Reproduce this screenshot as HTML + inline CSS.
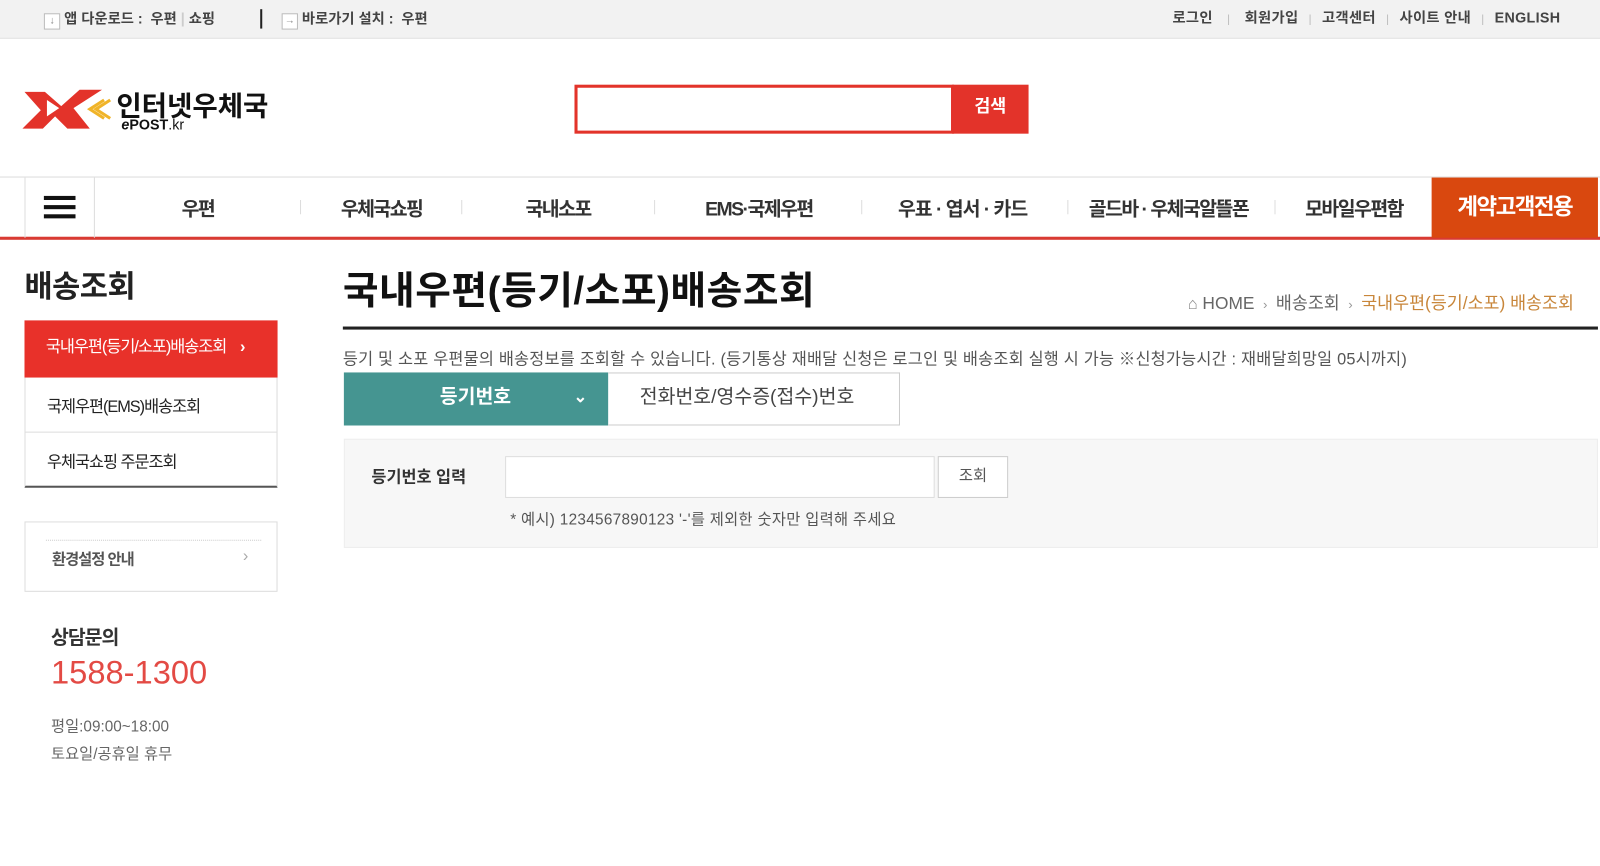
<!DOCTYPE html>
<html><head><meta charset="utf-8">
<style>
*{margin:0;padding:0;box-sizing:border-box}
html,body{width:1600px;height:866px;overflow:hidden;background:#fff}
#w{position:absolute;left:0;top:0;width:1568px;height:849px;transform:scale(1.0204);transform-origin:0 0;font-family:"Liberation Sans","Noto Sans CJK KR",sans-serif;color:#333}
.a{position:absolute;white-space:nowrap}
.top{position:absolute;left:0;top:0;width:1600px;height:38px;background:#f2f2f2;border-bottom:1px solid #e2e2e2}
.ib{display:inline-block;width:16px;height:16px;border:1px solid #bbb;background:#fff;font-size:10px;color:#888;text-align:center;line-height:14px}
.nav{position:absolute;left:0;top:173px;width:1600px;height:62px;border-top:1px solid #ddd;border-bottom:3px solid #d93a32}
.nv{position:absolute;top:16px;font-size:19px;font-weight:bold;color:#333;letter-spacing:-1.5px}
.sep{position:absolute;top:22px;width:1px;height:14px;background:#ddd}
.s{color:#bbb;font-weight:normal;font-size:11px;margin:0 10px}
</style></head><body><div id="w">
<div class="top">
 <div class="a" style="left:43px;top:8px;font-size:14px;font-weight:bold;color:#444"><span class="ib">↓</span> 앱 다운로드 : &nbsp;우편 <span style="color:#ccc">|</span> 쇼핑</div>
 <div class="a" style="left:255px;top:9px;width:2px;height:19px;background:#222"></div>
 <div class="a" style="left:276px;top:8px;font-size:14px;font-weight:bold;color:#444"><span class="ib">→</span> 바로가기 설치 : &nbsp;우편</div>
 <div class="a" style="left:1149px;top:7px;font-size:14px;font-weight:bold;color:#444;letter-spacing:0.3px">로그인<span class="s" style="margin:0 14px">|</span>회원가입<span class="s">|</span>고객센터<span class="s">|</span>사이트 안내<span class="s">|</span>ENGLISH</div>
</div>
<svg class="a" style="left:22px;top:84px" width="90" height="46" viewBox="0 0 90 46">
 <polygon points="2,6 22,6 38,20 56,4 78,4 50,22 66,42 44,42 32,30 20,42 0,42 18,24" fill="#e3332a"/>
 <polygon points="24,14 36,22 24,30" fill="#fff"/>
 <polyline points="86,14 72,23 86,32" fill="none" stroke="#f0b429" stroke-width="3"/>
 <polyline points="80,14 66,23 80,32" fill="none" stroke="#f0b429" stroke-width="3"/>
</svg>
<div class="a" style="left:114px;top:82px;font-size:27px;font-weight:bold;color:#111;letter-spacing:0">인터넷우체국</div>
<div class="a" style="left:119px;top:114px;font-size:14px;font-weight:bold;color:#111"><i>e</i>POST<span style="font-weight:normal">.kr</span></div>
<div class="a" style="left:563px;top:83px;width:372px;height:48px;border:3px solid #e3332a"></div>
<div class="a" style="left:933px;top:83px;width:75px;height:48px;background:#e3332a;color:#fff;font-size:17px;font-weight:bold;text-align:center;line-height:44px">검색</div>
<div class="nav">
 <div class="a" style="left:24px;top:0;width:69px;height:59px;border-left:1px solid #ddd;border-right:1px solid #ddd"></div>
 <div class="a" style="left:43px;top:18px;width:31px;height:4px;background:#111;box-shadow:0 9px 0 #111,0 18px 0 #111"></div>
 <div class="nv" style="left:178px">우편</div>
 <div class="sep" style="left:294px"></div>
 <div class="nv" style="left:334px">우체국쇼핑</div>
 <div class="sep" style="left:452px"></div>
 <div class="nv" style="left:515px">국내소포</div>
 <div class="sep" style="left:641px"></div>
 <div class="nv" style="left:691px">EMS·국제우편</div>
 <div class="sep" style="left:844px"></div>
 <div class="nv" style="left:880px;letter-spacing:-1px">우표 · 엽서 · 카드</div>
 <div class="sep" style="left:1046px"></div>
 <div class="nv" style="left:1067px">골드바 · 우체국알뜰폰</div>
 <div class="sep" style="left:1249px"></div>
 <div class="nv" style="left:1279px">모바일우편함</div>
 <div class="a" style="left:1403px;top:0;width:163px;height:59px;background:#d9480f;color:#fff;font-size:22px;font-weight:bold;text-align:center;line-height:58px;letter-spacing:-1.5px">계약고객전용</div>
</div>
<div class="a" style="left:24px;top:256px;font-size:30px;font-weight:bold;color:#222;letter-spacing:-0.5px">배송조회</div>
<div class="a" style="left:24px;top:314px;width:248px;height:164px;border:1px solid #ddd;border-bottom:2px solid #555"></div>
<div class="a" style="left:24px;top:314px;width:248px;height:56px;background:#e8312a;color:#fff;font-size:16px;line-height:54px;padding-left:21px;letter-spacing:-1px">국내우편(등기/소포)배송조회 <span style="margin-left:10px;font-weight:bold">›</span></div>
<div class="a" style="left:25px;top:423px;width:246px;height:1px;background:#ddd"></div>
<div class="a" style="left:46px;top:385px;font-size:16px;color:#222;letter-spacing:-1px">국제우편(EMS)배송조회</div>
<div class="a" style="left:46px;top:439px;font-size:16px;color:#222;letter-spacing:-1px">우체국쇼핑 주문조회</div>
<div class="a" style="left:24px;top:511px;width:248px;height:69px;border:1px solid #ddd"></div>
<div class="a" style="left:45px;top:529px;width:211px;border-top:1px dotted #ccc"></div>
<div class="a" style="left:51px;top:537px;font-size:15px;font-weight:bold;color:#555;letter-spacing:-1px">환경설정 안내</div>
<div class="a" style="left:238px;top:537px;font-size:16px;color:#aaa">›</div>
<div class="a" style="left:50px;top:610px;font-size:19px;font-weight:bold;color:#333;letter-spacing:-1px">상담문의</div>
<div class="a" style="left:50px;top:641px;font-size:32px;color:#e34a44;letter-spacing:0">1588-1300</div>
<div class="a" style="left:50px;top:701px;font-size:15px;color:#666">평일:09:00~18:00</div>
<div class="a" style="left:50px;top:728px;font-size:15px;color:#666">토요일/공휴일 휴무</div>
<div class="a" style="left:336px;top:254px;font-size:38px;font-weight:bold;color:#111;letter-spacing:0.5px">국내우편(등기/소포)배송조회</div>
<div class="a" style="left:1164px;top:283px;font-size:17px;color:#666;letter-spacing:0"><span style="color:#888;font-size:16px">⌂</span> HOME <span style="color:#999;font-size:13px">&nbsp;›&nbsp;</span> 배송조회 <span style="color:#999;font-size:13px">&nbsp;›&nbsp;</span> <span style="color:#c8863a">국내우편(등기/소포) 배송조회</span></div>
<div class="a" style="left:336px;top:320px;width:1230px;height:3px;background:#222"></div>
<div class="a" style="left:336px;top:338px;font-size:16px;color:#555;letter-spacing:0.2px">등기 및 소포 우편물의 배송정보를 조회할 수 있습니다. (등기통상 재배달 신청은 로그인 및 배송조회 실행 시 가능 ※신청가능시간 : 재배달희망일 05시까지)</div>
<div class="a" style="left:337px;top:365px;width:259px;height:52px;background:#459591;color:#fff;font-size:19px;font-weight:bold;line-height:50px;padding-left:94px">등기번호<span style="position:absolute;left:225px;top:0;font-size:16px">⌄</span></div>
<div class="a" style="left:596px;top:365px;width:286px;height:52px;border:1px solid #ccc;border-left:none;font-size:19px;color:#444;line-height:48px;padding-left:31px">전화번호/영수증(접수)번호</div>
<div class="a" style="left:337px;top:430px;width:1229px;height:107px;background:#f7f7f7;border:1px solid #eee"></div>
<div class="a" style="left:364px;top:454px;font-size:16px;font-weight:bold;color:#333">등기번호 입력</div>
<div class="a" style="left:495px;top:447px;width:421px;height:41px;background:#fff;border:1px solid #ddd"></div>
<div class="a" style="left:919px;top:447px;width:69px;height:41px;background:#fff;border:1px solid #ccc;font-size:15px;color:#555;text-align:center;line-height:38px">조회</div>
<div class="a" style="left:500px;top:498px;font-size:15px;color:#555;letter-spacing:0.3px">* 예시) 1234567890123 '-'를 제외한 숫자만 입력해 주세요</div>
</div></body></html>
